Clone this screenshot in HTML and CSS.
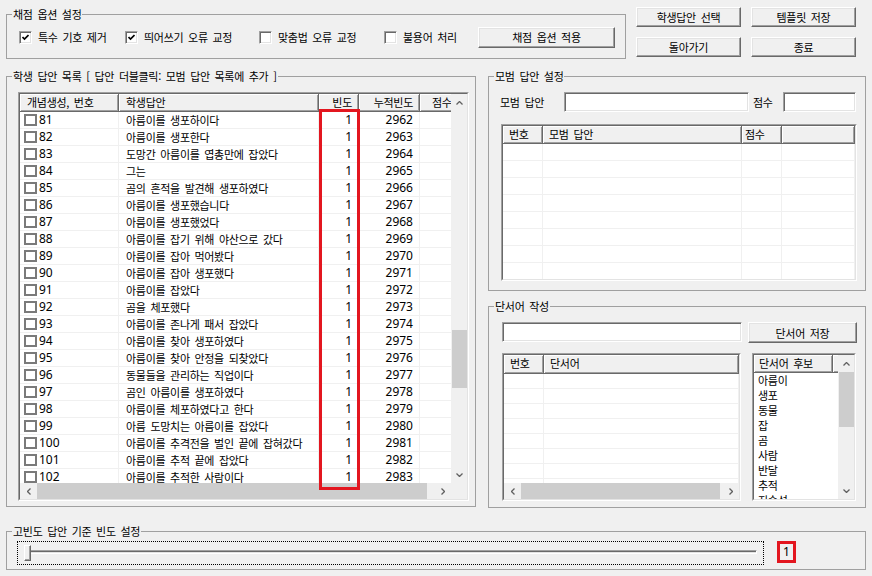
FILE: index.html
```html
<!DOCTYPE html>
<html lang="ko">
<head>
<meta charset="utf-8">
<title>채점</title>
<link rel="stylesheet" href="styles.css">
</head>
<body>
<div class="app">
  <div class="top">
    <div class="group opts">
      <span class="gtitle">채점 옵션 설정</span>
      <label class="chk w1"><span class="cb"><svg class="tick" viewBox="0 0 7 7"><path d="M0.5 3 L2.5 5 L6.5 1"/></svg></span>특수 기호 제거</label>
      <label class="chk w2"><span class="cb"><svg class="tick" viewBox="0 0 7 7"><path d="M0.5 3 L2.5 5 L6.5 1"/></svg></span>띄어쓰기 오류 교정</label>
      <label class="chk w3"><span class="cb"></span>맞춤법 오류 교정</label>
      <label class="chk w4"><span class="cb"></span>불용어 처리</label>
      <button class="btn apply">채점 옵션 적용</button>
    </div>
    <div class="topbtns">
      <button class="btn">학생답안 선택</button>
      <button class="btn">템플릿 저장</button>
      <button class="btn">돌아가기</button>
      <button class="btn">종료</button>
    </div>
  </div>

  <div class="mid">
    <div class="group left">
      <span class="gtitle">학생 답안 목록 [ 답안 더블클릭: 모범 답안 목록에 추가 ]</span>
      <div class="lv lv-main">
        <div class="lv-in">
          <div class="content">
            <div class="head">
              <div class="hc m0">개념생성, 번호</div>
              <div class="hc m1">학생답안</div>
              <div class="hc m2 r">빈도</div>
              <div class="hc m3 r">누적빈도</div>
              <div class="hc m4 hs">점수</div>
            </div>
            <div class="body">
              <div class="row"><div class="cell m0 c0"><span class="rcb"></span><span class="num">81</span></div><div class="cell m1">아름이를 생포하이다</div><div class="cell m2 r num">1</div><div class="cell m3 r num">2962</div><div class="cell m4"></div></div>
              <div class="row"><div class="cell m0 c0"><span class="rcb"></span><span class="num">82</span></div><div class="cell m1">아름이를 생포한다</div><div class="cell m2 r num">1</div><div class="cell m3 r num">2963</div><div class="cell m4"></div></div>
              <div class="row"><div class="cell m0 c0"><span class="rcb"></span><span class="num">83</span></div><div class="cell m1">도망간 아름이를 엽총만에 잡았다</div><div class="cell m2 r num">1</div><div class="cell m3 r num">2964</div><div class="cell m4"></div></div>
              <div class="row"><div class="cell m0 c0"><span class="rcb"></span><span class="num">84</span></div><div class="cell m1">그는</div><div class="cell m2 r num">1</div><div class="cell m3 r num">2965</div><div class="cell m4"></div></div>
              <div class="row"><div class="cell m0 c0"><span class="rcb"></span><span class="num">85</span></div><div class="cell m1">곰의 흔적을 발견해 생포하였다</div><div class="cell m2 r num">1</div><div class="cell m3 r num">2966</div><div class="cell m4"></div></div>
              <div class="row"><div class="cell m0 c0"><span class="rcb"></span><span class="num">86</span></div><div class="cell m1">아름이를 생포했습니다</div><div class="cell m2 r num">1</div><div class="cell m3 r num">2967</div><div class="cell m4"></div></div>
              <div class="row"><div class="cell m0 c0"><span class="rcb"></span><span class="num">87</span></div><div class="cell m1">아름이를 생포했었다</div><div class="cell m2 r num">1</div><div class="cell m3 r num">2968</div><div class="cell m4"></div></div>
              <div class="row"><div class="cell m0 c0"><span class="rcb"></span><span class="num">88</span></div><div class="cell m1">아름이를 잡기 위해 야산으로 갔다</div><div class="cell m2 r num">1</div><div class="cell m3 r num">2969</div><div class="cell m4"></div></div>
              <div class="row"><div class="cell m0 c0"><span class="rcb"></span><span class="num">89</span></div><div class="cell m1">아름이를 잡아 먹어봤다</div><div class="cell m2 r num">1</div><div class="cell m3 r num">2970</div><div class="cell m4"></div></div>
              <div class="row"><div class="cell m0 c0"><span class="rcb"></span><span class="num">90</span></div><div class="cell m1">아름이를 잡아 생포했다</div><div class="cell m2 r num">1</div><div class="cell m3 r num">2971</div><div class="cell m4"></div></div>
              <div class="row"><div class="cell m0 c0"><span class="rcb"></span><span class="num">91</span></div><div class="cell m1">아름이를 잡았다</div><div class="cell m2 r num">1</div><div class="cell m3 r num">2972</div><div class="cell m4"></div></div>
              <div class="row"><div class="cell m0 c0"><span class="rcb"></span><span class="num">92</span></div><div class="cell m1">곰을 체포했다</div><div class="cell m2 r num">1</div><div class="cell m3 r num">2973</div><div class="cell m4"></div></div>
              <div class="row"><div class="cell m0 c0"><span class="rcb"></span><span class="num">93</span></div><div class="cell m1">아름이를 존나게 패서 잡았다</div><div class="cell m2 r num">1</div><div class="cell m3 r num">2974</div><div class="cell m4"></div></div>
              <div class="row"><div class="cell m0 c0"><span class="rcb"></span><span class="num">94</span></div><div class="cell m1">아름이를 찾아 생포하였다</div><div class="cell m2 r num">1</div><div class="cell m3 r num">2975</div><div class="cell m4"></div></div>
              <div class="row"><div class="cell m0 c0"><span class="rcb"></span><span class="num">95</span></div><div class="cell m1">아름이를 찾아 안정을 되찾았다</div><div class="cell m2 r num">1</div><div class="cell m3 r num">2976</div><div class="cell m4"></div></div>
              <div class="row"><div class="cell m0 c0"><span class="rcb"></span><span class="num">96</span></div><div class="cell m1">동물들을 관리하는 직업이다</div><div class="cell m2 r num">1</div><div class="cell m3 r num">2977</div><div class="cell m4"></div></div>
              <div class="row"><div class="cell m0 c0"><span class="rcb"></span><span class="num">97</span></div><div class="cell m1">곰인 아름이를 생포하였다</div><div class="cell m2 r num">1</div><div class="cell m3 r num">2978</div><div class="cell m4"></div></div>
              <div class="row"><div class="cell m0 c0"><span class="rcb"></span><span class="num">98</span></div><div class="cell m1">아름이를 체포하였다고 한다</div><div class="cell m2 r num">1</div><div class="cell m3 r num">2979</div><div class="cell m4"></div></div>
              <div class="row"><div class="cell m0 c0"><span class="rcb"></span><span class="num">99</span></div><div class="cell m1">아름 도망치는 아름이를 잡았다</div><div class="cell m2 r num">1</div><div class="cell m3 r num">2980</div><div class="cell m4"></div></div>
              <div class="row"><div class="cell m0 c0"><span class="rcb"></span><span class="num">100</span></div><div class="cell m1">아름이를 추격전을 벌인 끝에 잡혀갔다</div><div class="cell m2 r num">1</div><div class="cell m3 r num">2981</div><div class="cell m4"></div></div>
              <div class="row"><div class="cell m0 c0"><span class="rcb"></span><span class="num">101</span></div><div class="cell m1">아름이를 추적 끝에 잡았다</div><div class="cell m2 r num">1</div><div class="cell m3 r num">2982</div><div class="cell m4"></div></div>
              <div class="row"><div class="cell m0 c0"><span class="rcb"></span><span class="num">102</span></div><div class="cell m1">아름이를 추적한 사람이다</div><div class="cell m2 r num">1</div><div class="cell m3 r num">2983</div><div class="cell m4"></div></div>
            </div>
          </div>
          <div class="vscroll">
            <div class="arr"><svg class="chev" viewBox="0 0 7 4"><path d="M0.5 3.5 L3.5 0.5 L6.5 3.5"/></svg></div>
            <div class="vtrack"><div class="vthumb thumb-main"></div></div>
            <div class="arr"><svg class="chev" viewBox="0 0 7 4"><path d="M0.5 0.5 L3.5 3.5 L6.5 0.5"/></svg></div>
          </div>
          <div class="hscroll">
            <div class="harr"><svg class="chevh" viewBox="0 0 4 7"><path d="M3.5 0.5 L0.5 3.5 L3.5 6.5"/></svg></div>
            <div class="htrack"><div class="hthumb hthumb-main"></div></div>
            <div class="harr"><svg class="chevh" viewBox="0 0 4 7"><path d="M0.5 0.5 L3.5 3.5 L0.5 6.5"/></svg></div>
          </div>
          <div class="corner"></div>
        </div>
      </div>
      <div class="redbox"></div>
    </div>

    <div class="rightcol">
      <div class="group model">
        <span class="gtitle">모범 답안 설정</span>
        <div class="frow">
          <span class="lbl1">모범 답안</span>
          <span class="tb tb-ans"></span>
          <span class="lbl2">점수</span>
          <span class="tb tb-score"></span>
        </div>
        <div class="lv lv-model">
          <div class="lv-in">
            <div class="head">
              <div class="hc d0">번호</div>
              <div class="hc d1">모범 답안</div>
              <div class="hc d2 hs2">점수</div>
              <div class="hc d3"></div>
            </div>
            <div class="row"><div class="cell d0"></div><div class="cell d1"></div><div class="cell d2"></div><div class="cell d3"></div></div>
            <div class="row"><div class="cell d0"></div><div class="cell d1"></div><div class="cell d2"></div><div class="cell d3"></div></div>
            <div class="row"><div class="cell d0"></div><div class="cell d1"></div><div class="cell d2"></div><div class="cell d3"></div></div>
            <div class="row"><div class="cell d0"></div><div class="cell d1"></div><div class="cell d2"></div><div class="cell d3"></div></div>
            <div class="row"><div class="cell d0"></div><div class="cell d1"></div><div class="cell d2"></div><div class="cell d3"></div></div>
            <div class="row"><div class="cell d0"></div><div class="cell d1"></div><div class="cell d2"></div><div class="cell d3"></div></div>
            <div class="row"><div class="cell d0"></div><div class="cell d1"></div><div class="cell d2"></div><div class="cell d3"></div></div>
            <div class="row"><div class="cell d0"></div><div class="cell d1"></div><div class="cell d2"></div><div class="cell d3"></div></div>
          </div>
        </div>
      </div>

      <div class="group clue">
        <span class="gtitle">단서어 작성</span>
        <div class="crow">
          <span class="tb tb-clue"></span>
          <button class="btn save">단서어 저장</button>
        </div>
        <div class="crow2">
          <div class="lv lv-clue">
            <div class="lv-in">
              <div class="content">
                <div class="head head19">
                  <div class="hc e0">번호</div>
                  <div class="hc e1">단서어</div>
                </div>
                <div class="row r15"><div class="cell e0"></div><div class="cell e1"></div></div>
                <div class="row r15"><div class="cell e0"></div><div class="cell e1"></div></div>
                <div class="row r15"><div class="cell e0"></div><div class="cell e1"></div></div>
                <div class="row r15"><div class="cell e0"></div><div class="cell e1"></div></div>
                <div class="row r15"><div class="cell e0"></div><div class="cell e1"></div></div>
                <div class="row r15"><div class="cell e0"></div><div class="cell e1"></div></div>
                <div class="row r15"><div class="cell e0"></div><div class="cell e1"></div></div>
                <div class="row r15"><div class="cell e0"></div><div class="cell e1"></div></div>
              </div>
              <div class="hscroll">
                <div class="harr"><svg class="chevh" viewBox="0 0 4 7"><path d="M3.5 0.5 L0.5 3.5 L3.5 6.5"/></svg></div>
                <div class="htrack"><div class="hthumb hthumb-clue"></div></div>
                <div class="harr"><svg class="chevh" viewBox="0 0 4 7"><path d="M0.5 0.5 L3.5 3.5 L0.5 6.5"/></svg></div>
              </div>
            </div>
          </div>
          <div class="lv lb">
            <div class="lv-in">
              <div class="content">
                <div class="head">
                  <div class="hc f0">단서어 후보</div>
                  <div class="hc f1"></div>
                </div>
                <div class="item">아름이</div>
                <div class="item">생포</div>
                <div class="item">동물</div>
                <div class="item">잡</div>
                <div class="item">곰</div>
                <div class="item">사람</div>
                <div class="item">반달</div>
                <div class="item">추적</div>
                <div class="item">지속성</div>
              </div>
              <div class="vscroll">
                <div class="arr"><svg class="chev" viewBox="0 0 7 4"><path d="M0.5 3.5 L3.5 0.5 L6.5 3.5"/></svg></div>
                <div class="vtrack"><div class="vthumb thumb-lb"></div></div>
                <div class="arr"><svg class="chev" viewBox="0 0 7 4"><path d="M0.5 0.5 L3.5 3.5 L6.5 0.5"/></svg></div>
              </div>
            </div>
          </div>
        </div>
      </div>
    </div>
  </div>

  <div class="group freq">
    <span class="gtitle">고빈도 답안 기준 빈도 설정</span>
    <div class="slider">
      <div class="track"></div>
      <div class="sthumb"></div>
    </div>
    <div class="val num">1</div>
  </div>
</div>
</body>
</html>
```

FILE: styles.css
```css
* { box-sizing: border-box; }
html, body { margin: 0; padding: 0; }
body {
  width: 872px; height: 576px; overflow: hidden;
  background: #f0f0f0; color: #000;
  font-family: "Noto Sans CJK KR", "Noto Sans", sans-serif;
  font-size: 11px; line-height: 14px;
  letter-spacing: -0.3px; word-spacing: 2px;
}
.app { padding: 7px 0 0 6px; }

/* group boxes */
.group { position: relative; border: 1px solid #a0a0a0; }
.gtitle {
  position: absolute; top: -8px; left: 5px; padding: 0 1px;
  background: #f0f0f0; line-height: 14px; white-space: nowrap;
}

/* top area */
.top { display: flex; align-items: flex-start; height: 50px; }
.opts {
  width: 620px; height: 45px; margin-top: 7px;
  display: flex; align-items: center; padding: 1px 0 0 12px;
}
.chk { display: flex; align-items: center; gap: 6px; white-space: nowrap; }
.w1 { width: 106px; } .w2 { width: 134px; } .w3 { width: 125px; } .w4 { width: 94px; }
.cb {
  width: 13px; height: 13px; flex: none; background: #fff;
  border: 1px solid; border-color: #a0a0a0 #fff #fff #a0a0a0;
  box-shadow: inset 1px 1px #696969, inset -1px -1px #e3e3e3;
  display: flex; align-items: center; justify-content: center;
}
.tick { width: 7px; height: 7px; fill: none; stroke: #000; stroke-width: 1.7; }

.btn {
  font: inherit; letter-spacing: inherit; word-spacing: inherit; color: #000;
  background: #f0f0f0; margin: 0; padding: 0;
  border: 1px solid; border-color: #fff #696969 #696969 #fff;
  box-shadow: inset -1px -1px #a0a0a0, inset 1px 1px #e3e3e3;
}
.apply { width: 137px; height: 21px; }
.topbtns {
  margin-left: 10px; display: grid;
  grid-template-columns: 105px 105px; grid-auto-rows: 20px; gap: 10px;
}

/* middle */
.mid { display: flex; margin-top: 19px; }
.left { width: 470px; height: 431px; padding: 15px 0 0 11px; }
.rightcol { margin-left: 12px; width: 378px; display: flex; flex-direction: column; gap: 15px; }

/* list views */
.lv { border: 1px solid; border-color: #a0a0a0 #fff #fff #a0a0a0; background: #fff; }
.lv-in {
  height: 100%; overflow: hidden;
  border: 1px solid; border-color: #696969 #e3e3e3 #e3e3e3 #696969;
}
.content { overflow: hidden; min-width: 0; min-height: 0; }
.head { display: flex; height: 18px; background: #f0f0f0; }
.head19 { height: 19px; }
.hc {
  flex: none; height: 100%; padding: 0 7px; line-height: 16px;
  white-space: nowrap; overflow: hidden;
  border-right: 1px solid #696969; border-bottom: 1px solid #696969;
  box-shadow: inset 1px 1px #fff, inset -1px -1px #a0a0a0;
}
.row { display: flex; height: 17px; border-bottom: 1px solid #f0f0f0; }
.r15 { height: 15px; }
.cell {
  flex: none; height: 100%; padding: 0 7px; line-height: 16px;
  white-space: nowrap; overflow: hidden; border-right: 1px solid #f0f0f0;
}
.r { text-align: right; padding-right: 6px; }
.num { font-family: "Noto Sans", sans-serif; font-size: 12px; letter-spacing: 0; word-spacing: 0; }

.lv-main { width: 451px; height: 409px; }
.lv-main .lv-in { display: grid; grid-template-columns: 1fr 16px; grid-template-rows: 1fr 16px; }
.m0 { width: 99px; } .m1 { width: 200px; } .m2 { width: 40px; } .m3 { width: 61px; } .m4 { width: 60px; }
.hs { padding-left: 12px; }
.c0 { display: flex; align-items: center; gap: 2px; padding-left: 4px; }
.rcb { width: 13px; height: 12px; flex: none; border: 2px solid #7a7a7a; background: #fff; }

/* scrollbars */
.vscroll { background: #f0f0f0; display: flex; flex-direction: column; }
.arr { height: 17px; flex: none; display: flex; align-items: center; justify-content: center; }
.vtrack { flex: 1; }
.vthumb { background: #cdcdcd; margin-left: 1px; }
.thumb-main { margin-top: 219px; height: 58px; }
.thumb-lb { margin-top: 0; height: 55px; }
.chev { width: 7px; height: 4px; fill: none; stroke: #606060; stroke-width: 1.3; }
.hscroll { background: #f0f0f0; display: flex; }
.harr { width: 17px; flex: none; display: flex; align-items: center; justify-content: center; }
.htrack { flex: 1; display: flex; }
.hthumb { background: #cdcdcd; }
.hthumb-main { width: 390px; }
.hthumb-clue { width: 199px; }
.chevh { width: 4px; height: 7px; fill: none; stroke: #606060; stroke-width: 1.3; }
.corner { background: #f0f0f0; }

.redbox {
  position: absolute; left: 312px; top: 32px; width: 41px; height: 381px;
  border: 3px solid #e3161f;
}

/* model answer group */
.model { height: 215px; padding: 15px 0 0 11px; }
.frow { display: flex; align-items: center; height: 20px; }
.lbl1 { width: 64px; }
.lbl2 { width: 30px; margin-left: 4px; }
.tb {
  height: 20px; background: #fff; flex: none;
  border: 1px solid; border-color: #a0a0a0 #fff #fff #a0a0a0;
  box-shadow: inset 1px 1px #696969, inset -1px -1px #e3e3e3;
}
.tb-ans { width: 185px; }
.tb-score { width: 73px; }
.lv-model { width: 356px; height: 157px; margin: 12px 0 0 1px; }
.d0 { width: 40px; } .d1 { width: 199px; } .d2 { width: 40px; } .d3 { flex: 1; }
.hc.d0, .hc.d1 { padding-left: 6px; }
.hs2 { padding-left: 3px; }

/* clue group */
.clue { height: 202px; padding: 15px 0 0 13px; }
.crow { display: flex; gap: 6px; height: 21px; }
.tb-clue { width: 240px; }
.save { width: 109px; height: 21px; }
.crow2 { display: flex; gap: 11px; margin-top: 10px; }
.lv-clue { width: 239px; height: 148px; }
.lv-clue .lv-in { display: grid; grid-template-rows: 1fr 16px; }
.e0 { width: 40px; } .e1 { flex: 1; }
.hc.e0, .hc.e1 { padding-left: 6px; }
.lb { width: 104px; height: 148px; }
.lb .lv-in { display: grid; grid-template-columns: 1fr 16px; }
.f0 { width: 79px; padding-left: 5px; }
.f1 { flex: 1; }
.item { height: 15px; line-height: 15px; padding-left: 4px; white-space: nowrap; }

/* bottom slider group */
.freq {
  width: 860px; height: 39px; margin-top: 23px;
  display: flex; align-items: flex-start; padding: 9px 0 0 10px;
}
.slider { position: relative; width: 747px; height: 24px; border: 1px dotted #000; padding: 8px 6px 0 7px; }
.track {
  height: 4px; background: #e3e3e3;
  border: 1px solid; border-color: #a0a0a0 #fff #fff #a0a0a0;
  box-shadow: inset 1px 1px #696969;
}
.sthumb {
  position: absolute; left: 6px; top: 3px; width: 7px; height: 16px;
  background: #f0f0f0;
  border: 1px solid; border-color: #fff #696969 #696969 #fff;
  box-shadow: inset -1px -1px #a0a0a0;
}
.val {
  margin-left: 13px; width: 19px; height: 22px;
  border: 3px solid #e3161f;
  display: flex; align-items: center; justify-content: center;
  line-height: 14px;
}
```
